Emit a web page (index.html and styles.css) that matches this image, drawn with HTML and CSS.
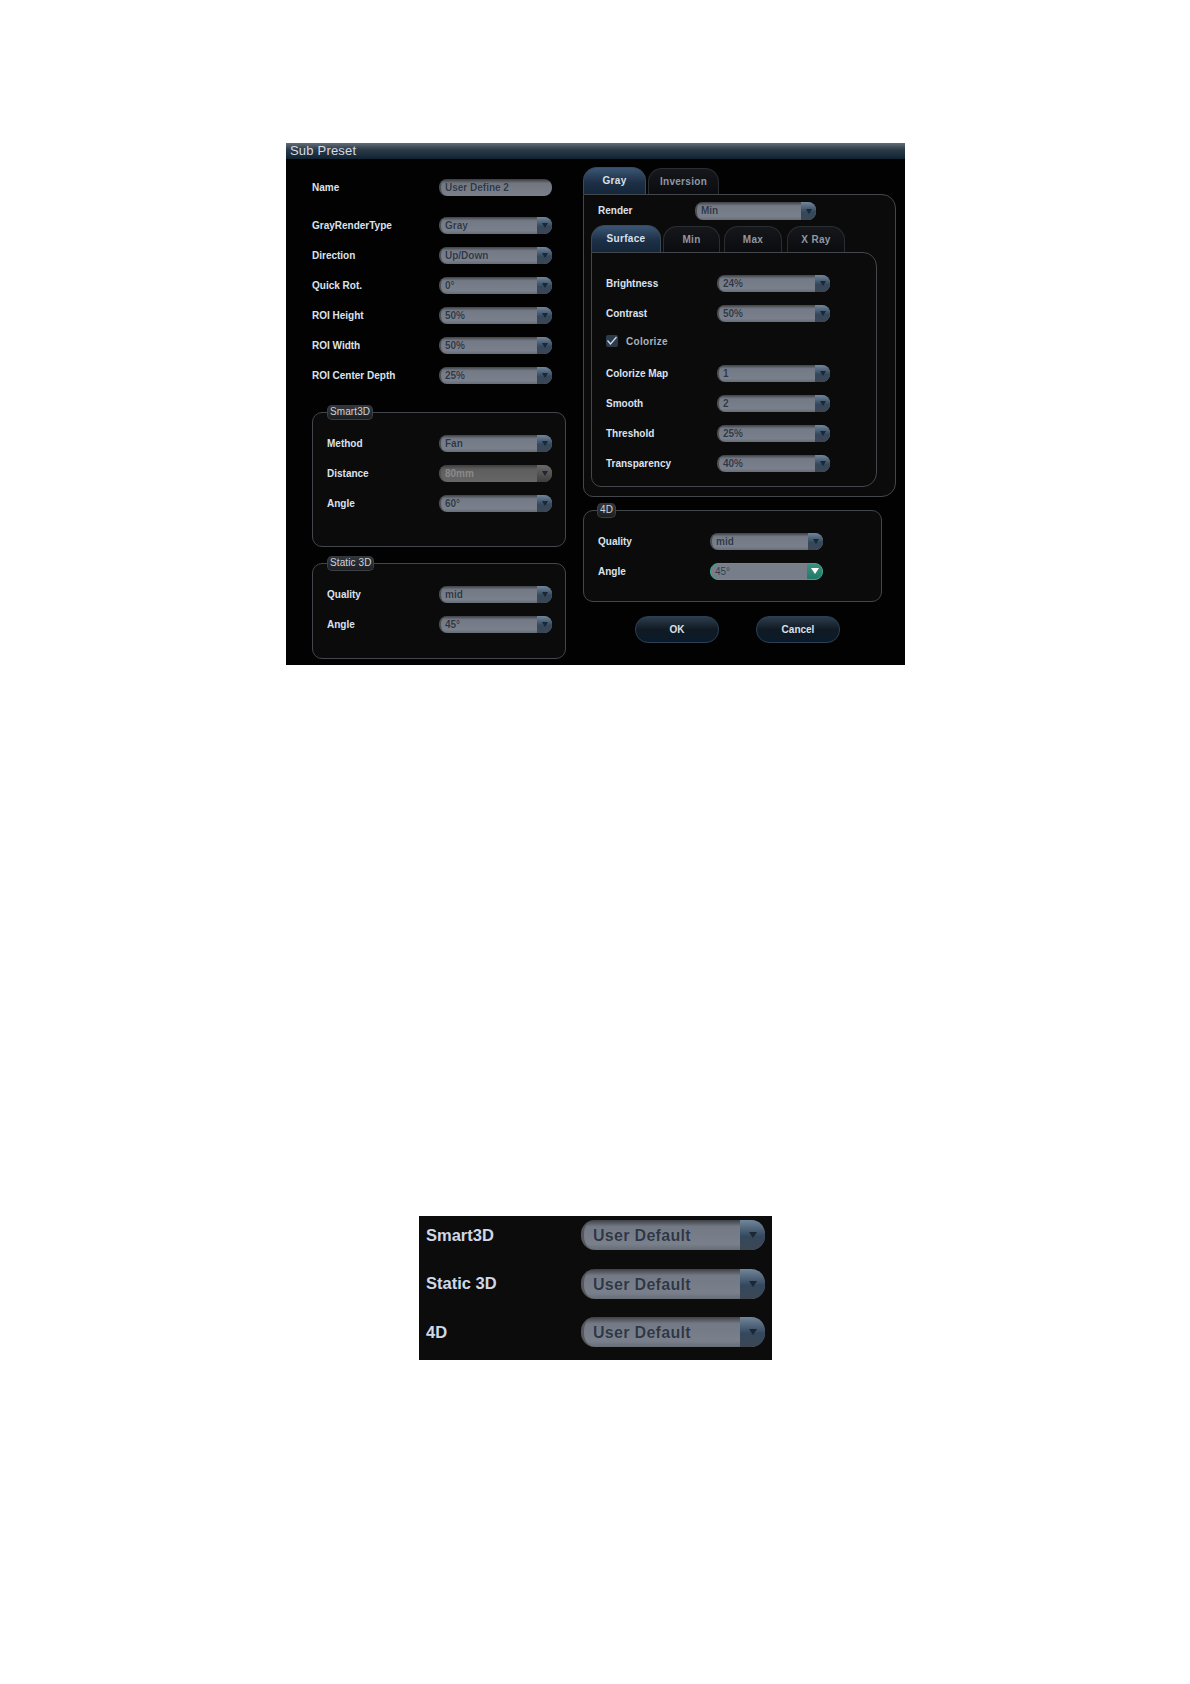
FILE: index.html
```html
<!DOCTYPE html>
<html lang="en">
<head>
<meta charset="UTF-8">
<title>Sub Preset</title>
<link rel="stylesheet" href="styles.css">
</head>
<body>
<div class="dialog">
  <div class="title">Sub Preset</div>
  <div class="dialog-body">
    <div class="col-left">
      <div class="row row-name"><span class="label">Name</span><div class="select no-arrow"><span class="value">User Define 2</span></div></div>
      <div class="row"><span class="label">GrayRenderType</span><div class="select"><span class="value">Gray</span><span class="arrow"><i></i></span></div></div>
      <div class="row"><span class="label">Direction</span><div class="select"><span class="value">Up/Down</span><span class="arrow"><i></i></span></div></div>
      <div class="row"><span class="label">Quick Rot.</span><div class="select"><span class="value">0°</span><span class="arrow"><i></i></span></div></div>
      <div class="row"><span class="label">ROI Height</span><div class="select"><span class="value">50%</span><span class="arrow"><i></i></span></div></div>
      <div class="row"><span class="label">ROI Width</span><div class="select"><span class="value">50%</span><span class="arrow"><i></i></span></div></div>
      <div class="row"><span class="label">ROI Center Depth</span><div class="select"><span class="value">25%</span><span class="arrow"><i></i></span></div></div>

      <div class="group group-smart">
        <span class="legend">Smart3D</span>
        <div class="row"><span class="label">Method</span><div class="select"><span class="value">Fan</span><span class="arrow"><i></i></span></div></div>
        <div class="row"><span class="label">Distance</span><div class="select disabled"><span class="value">80mm</span><span class="arrow"><i></i></span></div></div>
        <div class="row"><span class="label">Angle</span><div class="select"><span class="value">60°</span><span class="arrow"><i></i></span></div></div>
      </div>

      <div class="group group-static">
        <span class="legend">Static 3D</span>
        <div class="row"><span class="label">Quality</span><div class="select"><span class="value">mid</span><span class="arrow"><i></i></span></div></div>
        <div class="row"><span class="label">Angle</span><div class="select"><span class="value">45°</span><span class="arrow"><i></i></span></div></div>
      </div>
    </div>

    <div class="col-right">
      <div class="tabs tabs-main">
        <div class="tab active tab-gray">Gray</div>
        <div class="tab tab-inversion">Inversion</div>
      </div>
      <div class="panel-main">
        <div class="row row-render"><span class="label">Render</span><div class="select select-render"><span class="value">Min</span><span class="arrow"><i></i></span></div></div>
        <div class="tabs tabs-sub">
          <div class="tab active tab-surface">Surface</div>
          <div class="tab tab-min">Min</div>
          <div class="tab tab-max">Max</div>
          <div class="tab tab-xray">X Ray</div>
        </div>
        <div class="panel-sub">
          <div class="row"><span class="label">Brightness</span><div class="select"><span class="value">24%</span><span class="arrow"><i></i></span></div></div>
          <div class="row"><span class="label">Contrast</span><div class="select"><span class="value">50%</span><span class="arrow"><i></i></span></div></div>
          <div class="check-row">
            <span class="checkbox"><svg width="12" height="12" viewBox="0 0 12 12"><path d="M1.5 5.5 L4.5 9 L10.5 2" fill="none" stroke="#d5dde8" stroke-width="1.2"/></svg></span>
            <span class="label label-dim">Colorize</span>
          </div>
          <div class="row"><span class="label">Colorize Map</span><div class="select"><span class="value">1</span><span class="arrow"><i></i></span></div></div>
          <div class="row"><span class="label">Smooth</span><div class="select"><span class="value">2</span><span class="arrow"><i></i></span></div></div>
          <div class="row"><span class="label">Threshold</span><div class="select"><span class="value">25%</span><span class="arrow"><i></i></span></div></div>
          <div class="row"><span class="label">Transparency</span><div class="select"><span class="value">40%</span><span class="arrow"><i></i></span></div></div>
        </div>
      </div>

      <div class="group group-4d">
        <span class="legend">4D</span>
        <div class="row"><span class="label">Quality</span><div class="select"><span class="value">mid</span><span class="arrow"><i></i></span></div></div>
        <div class="row"><span class="label">Angle</span><div class="select focused"><span class="value">45°</span><span class="arrow"><i></i></span></div></div>
      </div>

      <div class="buttons">
        <div class="btn">OK</div>
        <div class="btn">Cancel</div>
      </div>
    </div>
  </div>
</div>

<div class="presets">
  <div class="preset-row"><span class="preset-label">Smart3D</span><div class="select select-big"><span class="value">User Default</span><span class="arrow"><i></i></span></div></div>
  <div class="preset-row"><span class="preset-label">Static 3D</span><div class="select select-big"><span class="value">User Default</span><span class="arrow"><i></i></span></div></div>
  <div class="preset-row"><span class="preset-label">4D</span><div class="select select-big"><span class="value">User Default</span><span class="arrow"><i></i></span></div></div>
</div>
</body>
</html>
```

FILE: styles.css
```css
body {
  margin: 0;
  padding-top: 143px;
  height: 1541px;
  background-color: #fff;
  font-family: "Liberation Sans", Arial, sans-serif;
  overflow: hidden;
}
.dialog {
  width: 619px;
  height: 522px;
  margin-left: 286px;
  background-color: #020203;
  color: #d9dfea;
}
.title {
  height: 16px;
  padding-left: 4px;
  font-size: 13px;
  line-height: 16px;
  letter-spacing: 0.2px;
  color: #d3dbe4;
  background: linear-gradient(#626d76, #2e3c49 40%, #0f2231);
}
.dialog-body {
  display: flex;
}
.col-left {
  width: 297px;
  padding: 13px 0 0 26px;
  box-sizing: border-box;
}
.row {
  display: flex;
  align-items: center;
  height: 30px;
}
.row-name {
  margin-bottom: 8px;
}
.label {
  width: 127px;
  flex: none;
  font-size: 10px;
  font-weight: bold;
  color: #dbe2ee;
}
.label-dim {
  color: #aab2bd;
  letter-spacing: 0.3px;
}

/* dropdowns */
.select {
  display: flex;
  width: 113px;
  height: 17px;
  flex: none;
  border-radius: 8px;
  overflow: hidden;
  box-sizing: border-box;
  background: linear-gradient(#3e4146, #747a85 22%, #7a808b 80%, #676d77);
  border-left: 2px solid #4d5055;
}
.no-arrow {
  background: linear-gradient(#383b3f, #71767f 25%, #7b808a);
}
.value {
  flex: 1;
  padding-left: 4px;
  font-size: 10px;
  font-weight: bold;
  line-height: 18px;
  color: #2e3746;
  text-shadow: 0 0 1px #9298a2;
}
.arrow {
  display: flex;
  align-items: center;
  justify-content: center;
  width: 15px;
  flex: none;
  background: linear-gradient(#71869b, #34485d 55%, #3c4652);
}
.arrow i {
  width: 0;
  height: 0;
  border-left: 3px solid transparent;
  border-right: 3px solid transparent;
  border-top: 5px solid #1b2735;
}
.disabled {
  background: linear-gradient(#3d3d3d, #5e5e5e 25%, #666);
}
.disabled .value {
  color: #8a8a8a;
  text-shadow: none;
}
.disabled .arrow {
  background: linear-gradient(#6a6a6a, #3f3d3b);
}
.focused {
  border: 1px solid #3da588;
  background: #777e8a;
}
.focused .value {
  font-weight: normal;
  line-height: 16px;
}
.focused .arrow {
  background: linear-gradient(#3f8f80, #1f7a68);
}
.focused .arrow i {
  border-top-color: #fff;
  border-left-width: 4px;
  border-right-width: 4px;
  border-top-width: 6px;
}

/* framed groups */
.group {
  position: relative;
  width: 254px;
  padding: 15px 0 0 14px;
  box-sizing: border-box;
  background-color: #0b0b0c;
  border: 1px solid #43474b;
  border-radius: 10px;
}
.group .label {
  width: 112px;
}
.group-smart {
  height: 135px;
  margin-top: 22px;
}
.group-static {
  height: 96px;
  margin-top: 16px;
}
.group-4d {
  width: 299px;
  height: 92px;
  margin: 13px 0 0 0;
}
.legend {
  position: absolute;
  top: -8px;
  left: 14px;
  padding: 0 2px;
  height: 14px;
  font-size: 10px;
  line-height: 14px;
  letter-spacing: 0.1px;
  color: #ccd3dd;
  background: linear-gradient(#34383d, #1c1f22);
  border-radius: 5px;
  border: 1px solid #3c4045;
  border-top: 0;
}
.group-4d .legend {
  left: 13px;
}

/* tabs */
.col-right {
  padding-top: 8px;
}
.tabs {
  display: flex;
  align-items: flex-end;
}
.tabs-main {
  gap: 2px;
  height: 27px;
}
.tabs-sub {
  margin-top: 5px;
  margin-left: 7px;
  height: 27px;
}
.tab {
  height: 26px;
  box-sizing: border-box;
  text-align: center;
  font-size: 10px;
  font-weight: bold;
  line-height: 26px;
  letter-spacing: 0.3px;
  color: #8f97a3;
  background: linear-gradient(#15171b, #0b0c0f);
  border: 1px solid #2a2e33;
  border-bottom: 0;
  border-radius: 14px 14px 0 0;
}
.tab.active {
  height: 27px;
  color: #d9e0ea;
  background: linear-gradient(#3a5675, #1e3046 55%, #14263a);
  border-color: #3b4a5a;
}
.tab-gray { width: 63px; }
.tab-inversion { width: 71px; }
.tab-surface { width: 70px; }
.tab-min { width: 57px; margin-left: 2px; }
.tab-max { width: 58px; margin-left: 4px; }
.tab-xray { width: 58px; margin-left: 5px; }
.panel-main {
  width: 313px;
  height: 303px;
  box-sizing: border-box;
  background-color: #0b0b0c;
  border: 1px solid #43474b;
  border-radius: 0 14px 14px 10px;
}
.row-render {
  height: 18px;
  margin-top: 7px;
  padding-left: 14px;
}
.row-render .label {
  width: 97px;
  margin-bottom: 2px;
}
.select-render {
  width: 121px;
  height: 18px;
}
.panel-sub {
  width: 286px;
  height: 235px;
  margin-left: 7px;
  padding: 15px 0 0 14px;
  box-sizing: border-box;
  background-color: #0b0b0c;
  border: 1px solid #43474b;
  border-radius: 0 14px 14px 10px;
}
.panel-sub .label {
  width: 111px;
}
.check-row {
  display: flex;
  align-items: center;
  height: 26px;
  margin-bottom: 4px;
}
.checkbox {
  display: flex;
  width: 12px;
  height: 12px;
  margin-right: 8px;
  background-color: #2c3b4c;
  border-radius: 2px;
}

/* buttons */
.buttons {
  display: flex;
  gap: 37px;
  margin: 14px 0 0 52px;
}
.btn {
  width: 84px;
  height: 27px;
  box-sizing: border-box;
  text-align: center;
  font-size: 10px;
  font-weight: bold;
  line-height: 25px;
  color: #d9e0ea;
  background: linear-gradient(#2d3c4c, #111a24 50%, #0b1a2a);
  border: 1px solid #2b4055;
  border-radius: 13px;
}

/* lower strip */
.presets {
  display: flex;
  flex-direction: column;
  gap: 10.5px;
  width: 353px;
  height: 144px;
  margin: 551px 0 0 419px;
  box-sizing: border-box;
  background-color: #0c0c0d;
}
.preset-row {
  display: flex;
  align-items: center;
  height: 38px;
  padding-left: 7px;
}
.preset-label {
  width: 155px;
  flex: none;
  font-size: 16.5px;
  font-weight: bold;
  color: #cfd8e6;
}
.select-big {
  width: 184px;
  height: 30px;
  border-radius: 14px;
  border-left: 3px solid #55585c;
}
.select-big .value {
  padding-left: 9px;
  font-size: 16px;
  line-height: 31px;
  letter-spacing: 0.3px;
}
.select-big .arrow {
  width: 25px;
}
.select-big .arrow i {
  border-left-width: 4px;
  border-right-width: 4px;
  border-top-width: 6px;
}
```
